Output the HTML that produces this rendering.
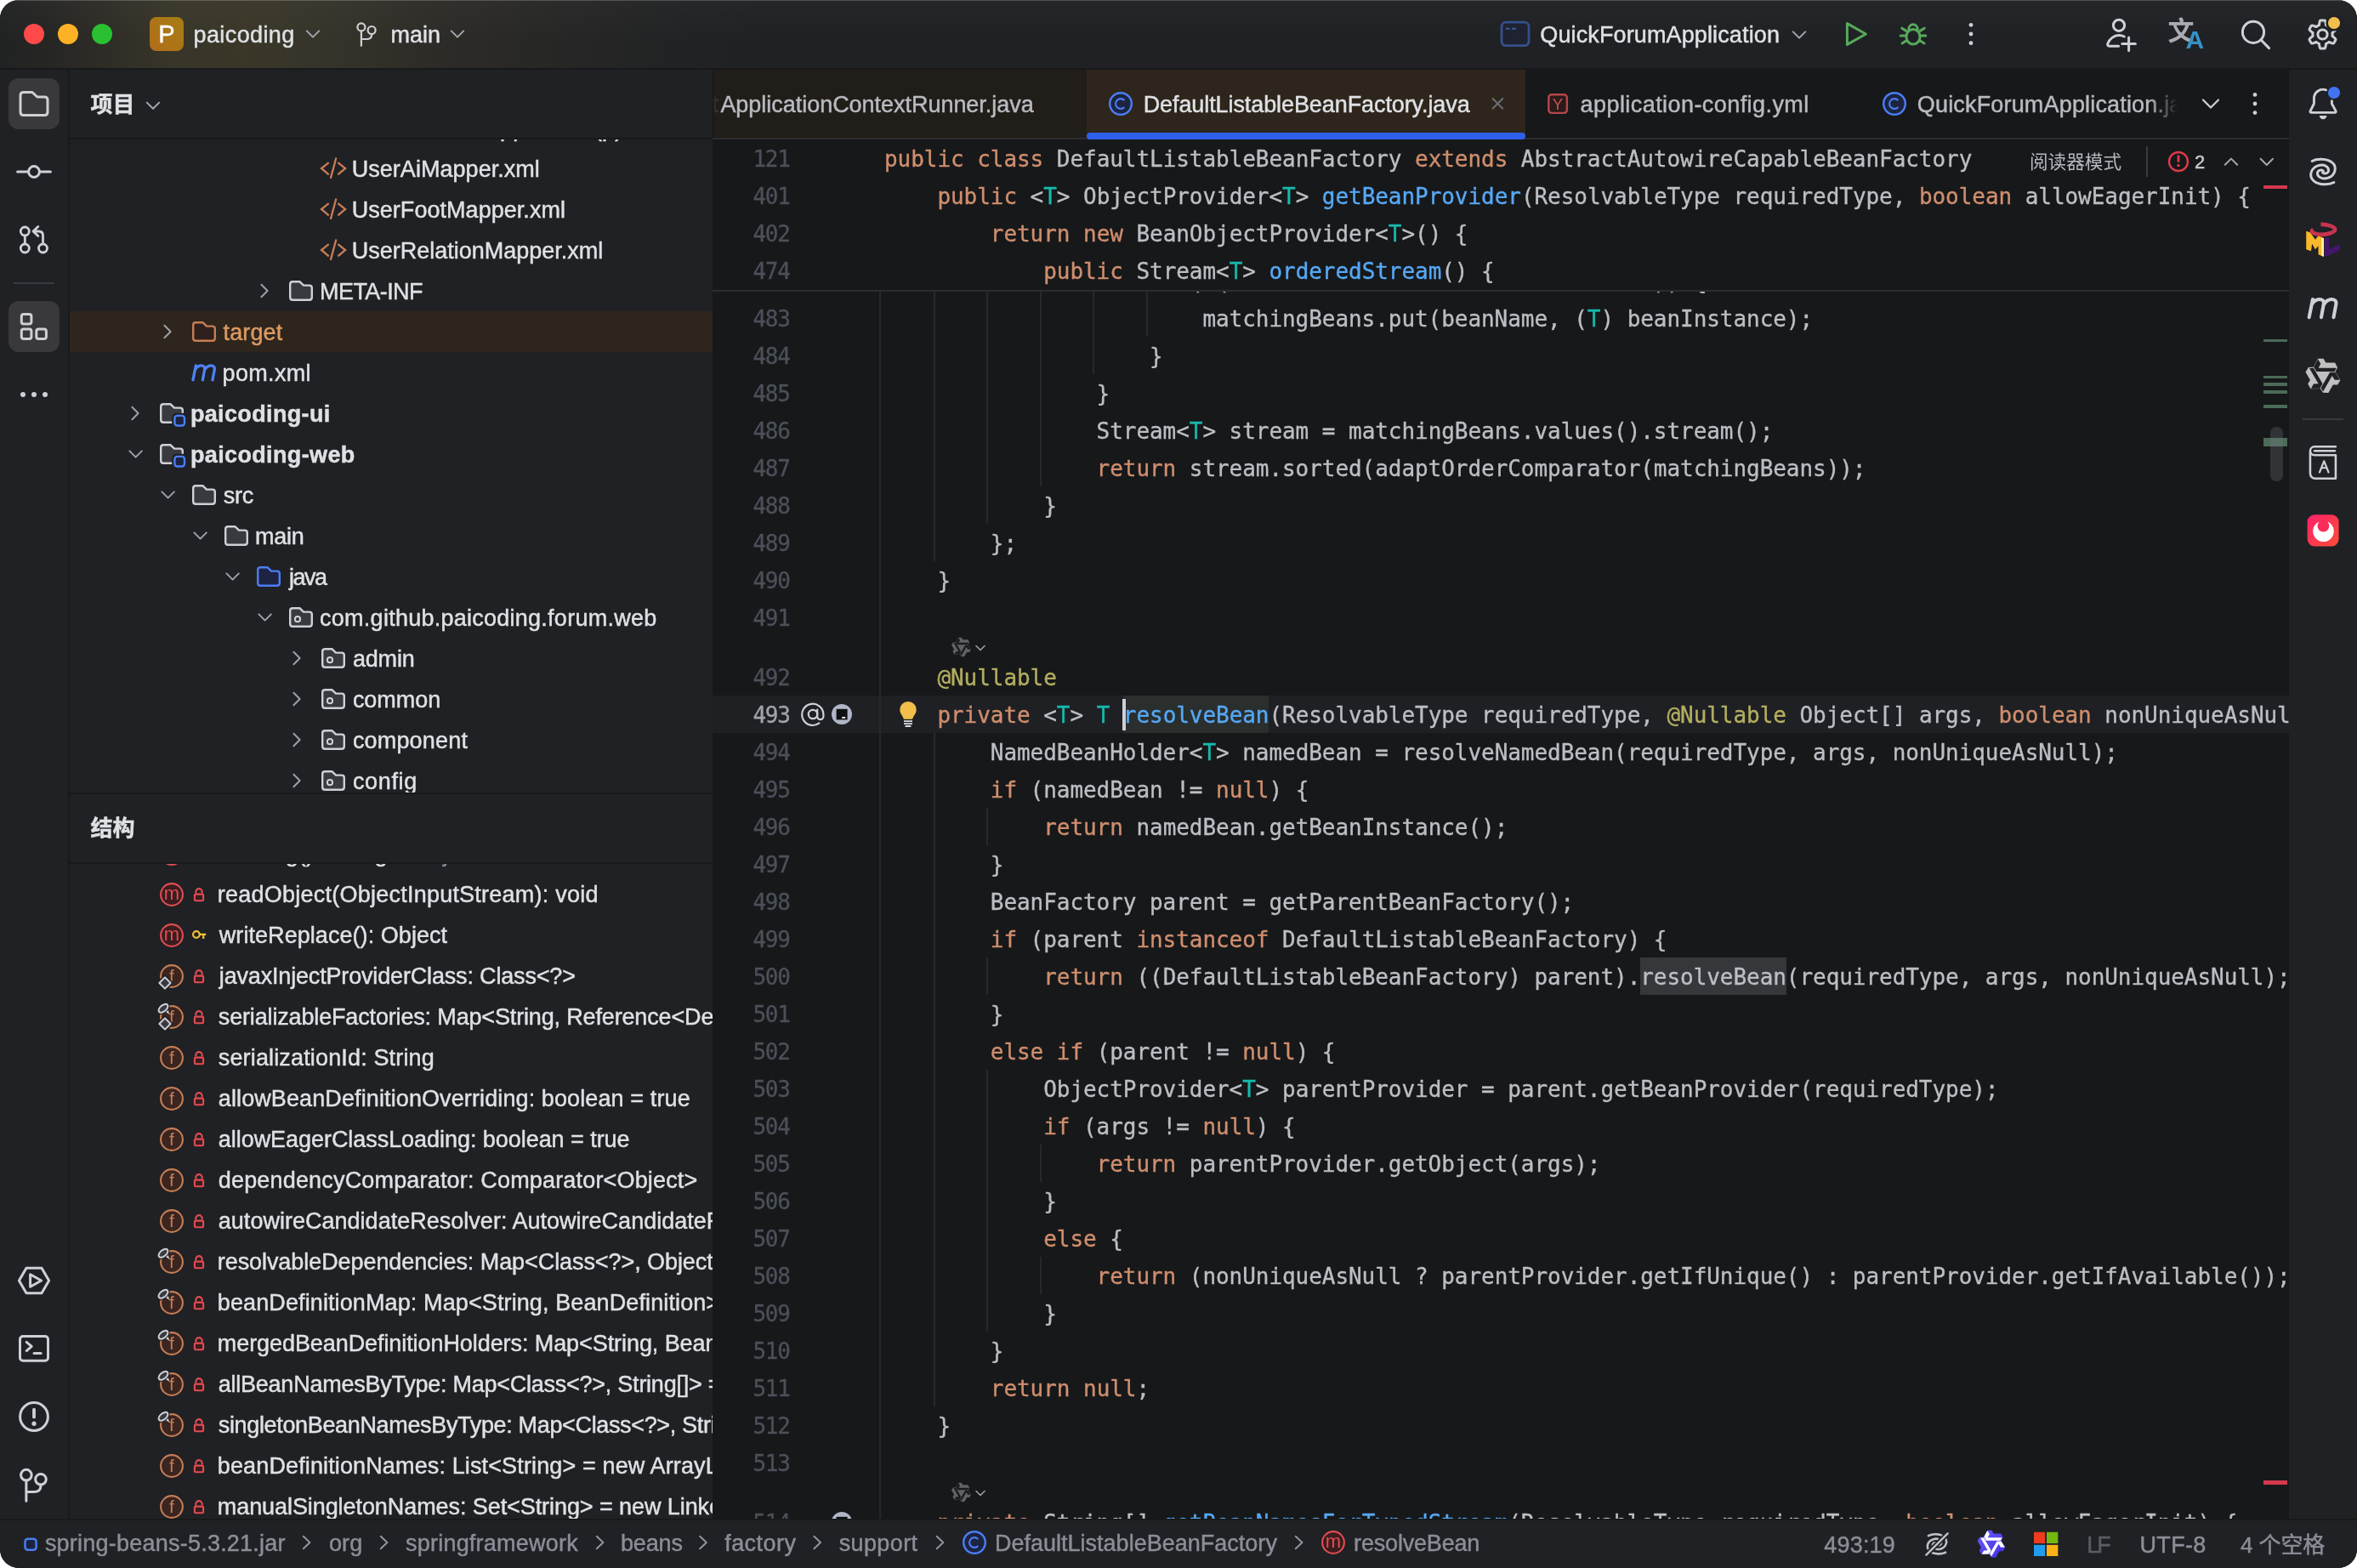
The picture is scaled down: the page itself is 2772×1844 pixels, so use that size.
<!DOCTYPE html>
<html lang="zh"><head><meta charset="utf-8"><title>paicoding – DefaultListableBeanFactory.java</title>
<style>
html,body{margin:0;padding:0;background:#fff;width:2772px;height:1844px;overflow:hidden;}
#win{will-change:transform;position:relative;width:2772px;height:1844px;border-radius:22px;overflow:hidden;background:#202124;
 font-family:"Liberation Sans","Noto Sans CJK SC",sans-serif;font-size:27px;color:#dfe1e5;letter-spacing:.25px;}
#win *{box-sizing:border-box;}
.a{position:absolute;}
.t{position:absolute;white-space:pre;line-height:48px;height:48px;-webkit-text-stroke:.45px currentColor;}
svg{position:absolute;overflow:visible;}
/* title bar */
#title{left:0;top:0;width:2772px;height:80px;background:
 linear-gradient(180deg,rgba(255,255,255,.025),rgba(255,255,255,0) 60%),
 linear-gradient(90deg,#212223 0,#262624 60px,#2e2c26 120px,#383529 200px,#3a3729 290px,#35322a 400px,#2d2b27 520px,#272726 640px,#222324 780px,#202124 900px);}
#title:before{content:"";position:absolute;left:0;top:0;right:0;height:1px;background:rgba(255,255,255,.2);}
#tline{left:0;top:80px;width:2772px;height:2px;background:#18191b;}
.tl{position:absolute;top:28px;width:24px;height:24px;border-radius:50%;}
#pico{left:176px;top:20px;width:40px;height:40px;border-radius:8px;background:linear-gradient(45deg,#b46c1a,#a47e14);
 color:#fff;font-size:29px;line-height:41px;-webkit-text-stroke:.4px #fff;text-align:center;letter-spacing:0;}
/* strips */
#lstrip{left:0;top:82px;width:80px;height:1704px;background:#202124;}
#lsdiv{left:80px;top:82px;width:2px;height:1704px;background:#18191b;}
#rstrip{left:2692px;top:82px;width:80px;height:1704px;background:#202124;}
.sbtn{position:absolute;left:10px;width:60px;height:60px;border-radius:12px;background:#39393b;}
/* left panel */
#lpanel{left:82px;top:82px;width:756px;height:1704px;background:#202124;overflow:hidden;}
.hline{position:absolute;left:0;width:756px;height:2px;background:#18191b;}
.row{position:absolute;left:0;width:756px;height:48px;}
.row.sel{background:#2e251d;}
.b{font-weight:bold;}
/* editor */
#editor{left:838px;top:82px;width:1854px;height:1704px;background:#17181a;overflow:hidden;}
.code,.ln{font-family:"DejaVu Sans Mono","Liberation Mono",monospace;font-size:26px;letter-spacing:-.053px;}
.cl{position:absolute;left:202px;height:44px;line-height:44px;white-space:pre;color:#bcbec4;-webkit-text-stroke:.35px currentColor;}
.ln{position:absolute;left:0;width:90.5px;text-align:right;letter-spacing:-1.3px;-webkit-text-stroke:.3px currentColor;height:44px;line-height:44px;color:#4b5059;}
.k{color:#cf8e6d;}.f{color:#56a8f5;}.tp{color:#16baac;}.an{color:#b3ae60;}
.g{position:absolute;width:2px;background:#27282c;}
/* status */
#status{left:0;top:1786px;width:2772px;height:58px;background:#202124;border-top:2px solid #18191b;color:#8b8e98;}
#status .t{line-height:56px;height:56px;top:0;}

</style></head>
<body>
<div id="win">
<div class="a" id="title">
<div class="tl" style="left:28px;background:#fe4a49"></div><div class="tl" style="left:68px;background:#fdb226"></div><div class="tl" style="left:108px;background:#29c131"></div>
<div class="a" id="pico">P</div>
<div id="k_t_paicoding" class="t" style="left:227.50px;top:17.0px;letter-spacing:0.4px;">paicoding</div>
<div id="k_t_main" class="t" style="left:459.60px;top:17.0px;letter-spacing:-0.067px;">main</div>
<div id="k_t_qfa" class="t" style="left:1811.30px;top:17.0px;letter-spacing:0.125px;">QuickForumApplication</div>
<div class="a" style="left:2549.6px;top:17px;font:700 31px/34px 'Noto Sans CJK SC',sans-serif;color:#a9acb1;letter-spacing:0">文</div>
<div class="a" style="left:2570.4px;top:32px;font:700 30px/30px 'Liberation Sans',sans-serif;color:#3592c4;letter-spacing:0">A</div>
</div><div class="a" id="tline"></div>
<div class="a" id="lstrip"><div class="sbtn" style="top:10px"></div><div class="sbtn" style="top:272px"></div><div class="a" style="left:16px;top:250px;width:48px;height:2px;background:#3a3b3f"></div></div><div class="a" id="lsdiv"></div>
<div class="a" id="rstrip"><div class="a" style="left:16px;top:410px;width:48px;height:2px;background:#3a3b3f"></div></div>
<div class="a" id="status">
<div id="k_s_jar" class="t" style="left:52.90px;top:-1.2px;letter-spacing:0.227px;">spring-beans-5.3.21.jar</div>
<div id="k_s_org" class="t" style="left:386.90px;top:-1.2px;letter-spacing:0.2px;">org</div>
<div id="k_s_sf" class="t" style="left:477.00px;top:-1.2px;letter-spacing:0.221px;">springframework</div>
<div id="k_s_beans" class="t" style="left:730.00px;top:-1.2px;letter-spacing:-0.15px;">beans</div>
<div id="k_s_factory" class="t" style="left:852.20px;top:-1.2px;letter-spacing:0.45px;">factory</div>
<div id="k_s_support" class="t" style="left:986.70px;top:-1.2px;letter-spacing:0.383px;">support</div>
<div id="k_s_dlbf" class="t" style="left:1169.90px;top:-1.2px;letter-spacing:0.012px;">DefaultListableBeanFactory</div>
<div id="k_s_rb" class="t" style="left:1592.10px;top:-1.2px;letter-spacing:-0.18px;">resolveBean</div>
<div id="k_s_pos" class="t" style="left:2145.20px;top:1.0px;letter-spacing:0.22px;">493:19</div>
<div id="k_s_lf" class="t" style="left:2454.20px;top:1.0px;letter-spacing:-3.0px;color:#5a5d63;">LF</div>
<div id="k_s_utf" class="t" style="left:2516.50px;top:1.0px;letter-spacing:0.325px;">UTF-8</div>
<div id="k_s_sp" class="t" style="left:2634.90px;top:0.6px;font:26px 'Liberation Sans','Noto Sans CJK SC',sans-serif;line-height:56px;letter-spacing:-0.05px;">4 个空格</div>
</div>
<svg class="a" style="left:0;top:0;pointer-events:none" width="2772" height="1844" viewBox="0 0 2772 1844">
<defs><linearGradient id="tyg" x1="0" y1="0" x2="1" y2="1"><stop offset="0" stop-color="#6a5cff"/><stop offset="1" stop-color="#3f2ee0"/></linearGradient><linearGradient id="redg" x1="0" y1="0" x2="1" y2="1"><stop offset="0" stop-color="#fd2168"/><stop offset="1" stop-color="#fc4c38"/></linearGradient><filter id="bl"><feGaussianBlur stdDeviation="0.7"/></filter></defs>
<path d="M360.8,36.4 L368,43.6 L375.2,36.4" fill="none" stroke="#a4a7b0" stroke-width="2.0" stroke-linecap="round" stroke-linejoin="round"/>
<circle cx="424.9" cy="31.9" r="4.5" fill="none" stroke="#ced0d6" stroke-width="2.2"/><circle cx="437.1" cy="35.5" r="4.5" fill="none" stroke="#ced0d6" stroke-width="2.2"/><path d="M424.9,36.4 V53.8 M437.1,40.0 V41.0 Q437.1,46.0 431.1,46.0 H424.9" fill="none" stroke="#ced0d6" stroke-width="2.2" stroke-linecap="round"/>
<path d="M530.8,36.4 L538,43.6 L545.2,36.4" fill="none" stroke="#a4a7b0" stroke-width="2.0" stroke-linecap="round" stroke-linejoin="round"/>
<rect x="1766" y="26.2" width="32" height="27.4" rx="5" fill="#1f2230" stroke="#35508c" stroke-width="2.8"/><path d="M1770.8,33.8 h4.8 M1778,33.8 h5" stroke="#35508c" stroke-width="2.6"/>
<path d="M2108.8,37.4 L2116,44.6 L2123.2,37.4" fill="none" stroke="#a4a7b0" stroke-width="2.0" stroke-linecap="round" stroke-linejoin="round"/>
<path d="M2172.4,27.6 L2194.4,40 L2172.4,52.4 Z" fill="none" stroke="#57aa5a" stroke-width="3" stroke-linejoin="round"/>
<g fill="none" stroke="#57aa5a" stroke-width="3" stroke-linecap="round"><rect x="2242" y="34.6" width="16" height="17.4" rx="8"/><path d="M2244.8,34.4 a5.2,5.6 0 0 1 10.4,0"/><path d="M2236.8,33.2 L2242,36.4 M2235.2,42 H2242 M2237,51 L2242,47.8 M2263.2,33.2 L2258,36.4 M2264.8,42 H2258 M2263,51 L2258,47.8"/></g>
<circle cx="2318" cy="29.3" r="2.4" fill="#ced0d6"/>
<circle cx="2318" cy="40" r="2.4" fill="#ced0d6"/>
<circle cx="2318" cy="50.7" r="2.4" fill="#ced0d6"/>
<g fill="none" stroke="#ced0d6" stroke-width="3" stroke-linecap="round"><circle cx="2492" cy="29.8" r="6.6"/><path d="M2491.6,54.2 H2480.6 a2,2 0 0 1 -1.9,-2.6 C2480.6,45.6 2486.4,41.6 2492,41.6 C2494.4,41.6 2496.4,42.1 2498.2,43"/><path d="M2503.6,44 V59.4 M2495.8,51.6 H2511.4"/></g>
<g fill="none" stroke="#ced0d6" stroke-width="3" stroke-linecap="round"><circle cx="2650" cy="37.8" r="12.6"/><path d="M2659.2,47 L2668.6,56.6"/></g>
<path d="M2743.10,40.50 L2743.09,41.01 L2743.06,41.51 L2743.00,42.01 L2743.05,42.54 L2744.07,43.29 L2745.12,44.15 L2746.12,45.11 L2746.98,46.13 L2746.84,46.85 L2746.54,47.52 L2746.22,48.17 L2745.88,48.80 L2745.50,49.42 L2745.10,50.02 L2744.67,50.61 L2744.12,51.09 L2742.80,50.86 L2741.47,50.47 L2740.20,49.99 L2739.04,49.48 L2738.56,49.70 L2738.15,50.00 L2737.73,50.28 L2737.30,50.55 L2736.86,50.79 L2736.40,51.01 L2735.94,51.22 L2735.51,51.52 L2735.37,52.77 L2735.15,54.12 L2734.82,55.47 L2734.36,56.72 L2733.67,56.96 L2732.95,57.04 L2732.22,57.08 L2731.50,57.10 L2730.78,57.08 L2730.05,57.04 L2729.33,56.96 L2728.64,56.72 L2728.18,55.47 L2727.85,54.12 L2727.63,52.77 L2727.49,51.52 L2727.06,51.22 L2726.60,51.01 L2726.14,50.79 L2725.70,50.55 L2725.27,50.28 L2724.85,50.00 L2724.44,49.70 L2723.96,49.48 L2722.80,49.99 L2721.53,50.47 L2720.20,50.86 L2718.88,51.09 L2718.33,50.61 L2717.90,50.02 L2717.50,49.42 L2717.12,48.80 L2716.78,48.17 L2716.46,47.52 L2716.16,46.85 L2716.02,46.13 L2716.88,45.11 L2717.88,44.15 L2718.93,43.29 L2719.95,42.54 L2720.00,42.01 L2719.94,41.51 L2719.91,41.01 L2719.90,40.50 L2719.91,39.99 L2719.94,39.49 L2720.00,38.99 L2719.95,38.46 L2718.93,37.71 L2717.88,36.85 L2716.88,35.89 L2716.02,34.87 L2716.16,34.15 L2716.46,33.48 L2716.78,32.83 L2717.12,32.20 L2717.50,31.58 L2717.90,30.98 L2718.33,30.39 L2718.88,29.91 L2720.20,30.14 L2721.53,30.53 L2722.80,31.01 L2723.96,31.52 L2724.44,31.30 L2724.85,31.00 L2725.27,30.72 L2725.70,30.45 L2726.14,30.21 L2726.60,29.99 L2727.06,29.78 L2727.49,29.48 L2727.63,28.23 L2727.85,26.88 L2728.18,25.53 L2728.64,24.28 L2729.33,24.04 L2730.05,23.96 L2730.78,23.92 L2731.50,23.90 L2732.22,23.92 L2732.95,23.96 L2733.67,24.04 L2734.36,24.28 L2734.82,25.53 L2735.15,26.88 L2735.37,28.23 L2735.51,29.48 L2735.94,29.78 L2736.40,29.99 L2736.86,30.21 L2737.30,30.45 L2737.73,30.72 L2738.15,31.00 L2738.56,31.30 L2739.04,31.52 L2740.20,31.01 L2741.47,30.53 L2742.80,30.14 L2744.12,29.91 L2744.67,30.39 L2745.10,30.98 L2745.50,31.58 L2745.88,32.20 L2746.22,32.83 L2746.54,33.48 L2746.84,34.15 L2746.98,34.87 L2746.12,35.89 L2745.12,36.85 L2744.07,37.71 L2743.05,38.46 L2743.00,38.99 L2743.06,39.49 L2743.09,39.99 Z" fill="none" stroke="#ced0d6" stroke-width="3" stroke-linejoin="round"/><circle cx="2731.5" cy="40.5" r="5.6" fill="none" stroke="#ced0d6" stroke-width="3"/>
<circle cx="2745" cy="27" r="9.6" fill="#202124"/><circle cx="2745" cy="27" r="7.1" fill="#f2bf4d"/>
<path d="M24.0,112.25 Q24.0,108.5 27.75,108.5 L38.0,108.5 L43.75,114.0 L52.25,114.0 Q56.0,114.0 56.0,117.75 L56.0,131.75 Q56.0,135.5 52.25,135.5 L27.75,135.5 Q24.0,135.5 24.0,131.75 Z" fill="none" stroke="#ced0d6" stroke-width="3.0" stroke-linejoin="round"/>
<g fill="none" stroke="#ced0d6" stroke-width="3" stroke-linecap="round"><circle cx="40" cy="202" r="6.4"/><path d="M20.6,202 H32.4 M47.6,202 H59.4"/></g>
<g fill="none" stroke="#ced0d6" stroke-width="2.8" stroke-linecap="round" stroke-linejoin="round"><circle cx="29.3" cy="272" r="5"/><circle cx="29.3" cy="292" r="5"/><circle cx="50.5" cy="292" r="5"/><path d="M29.3,277.4 V286.6 M50.5,286.6 V277 Q50.5,272 45.5,272 H39.6 M44.8,266.4 L39,272 L44.8,277.6"/></g>
<g fill="none" stroke="#ced0d6" stroke-width="3"><rect x="25.3" y="369.5" width="11.6" height="11.6" rx="2.6"/><rect x="25.3" y="387" width="11.6" height="11.6" rx="2.6"/><rect x="42.8" y="387" width="11.6" height="11.6" rx="2.6"/></g>
<circle cx="27" cy="464" r="3" fill="#ced0d6"/>
<circle cx="40" cy="464" r="3" fill="#ced0d6"/>
<circle cx="53" cy="464" r="3" fill="#ced0d6"/>
<g fill="none" stroke="#ced0d6" stroke-width="3" stroke-linejoin="round"><path d="M22.4,1506 L31,1491.2 H49 L57.6,1506 L49,1520.8 H31 Z"/><path d="M35.6,1498.8 V1513.2 L48.6,1506 Z"/></g>
<g fill="none" stroke="#ced0d6" stroke-width="3" stroke-linecap="round" stroke-linejoin="round"><rect x="23.5" y="1571.5" width="33" height="28.8" rx="3.5"/><path d="M31.2,1578.4 L37.2,1583.4 L31.2,1588.6 M40,1591.4 H48.2"/></g>
<g fill="none" stroke="#ced0d6" stroke-width="3" stroke-linecap="round"><circle cx="40" cy="1666" r="16.4"/><path d="M40,1657.6 V1666.4" stroke-width="3.8"/></g><circle cx="40" cy="1674.2" r="2.6" fill="#ced0d6"/>
<circle cx="30.86" cy="1734.66" r="6.3" fill="none" stroke="#ced0d6" stroke-width="3"/><circle cx="47.94" cy="1739.7" r="6.3" fill="none" stroke="#ced0d6" stroke-width="3"/><path d="M30.86,1740.96 V1765.32 M47.94,1746.0 V1747.4 Q47.94,1754.4 39.54,1754.4 H30.86" fill="none" stroke="#ced0d6" stroke-width="3" stroke-linecap="round"/>
<g fill="none" stroke="#ced0d6" stroke-width="2.9" stroke-linecap="round" stroke-linejoin="round"><path d="M2735.6,105.8 A10.6,10.6 0 0 0 2721.4,116.2 V122 L2717.2,130.4 Q2716.4,132.4 2718.6,132.4 H2745.6 Q2747.8,132.4 2747,130.4 L2742.4,122 V118.8"/></g><path d="M2727.8,136 h8.6 a4.3,4.3 0 0 1 -8.6,0 z" fill="#ced0d6"/><circle cx="2745" cy="109" r="7.1" fill="#4273f3"/>
<g transform="translate(2732,202) scale(0.04081632653061224) translate(-785,-785)" fill="none" stroke="#ced0d6" stroke-width="72" stroke-linecap="round"><path d="M470,478 C600,400 900,395 1050,520 C1200,650 1150,900 900,970 C750,1005 620,930 625,822 C630,742 720,715 795,762"/><path d="M1100,1092 C970,1170 670,1175 520,1050 C370,920 420,670 670,600 C820,565 950,640 945,748 C940,828 850,855 775,808"/></g>
<g transform="translate(2700,250) scale(0.04081632653061224)" filter="url(#bl)"><path d="M300,530 L420,575 L560,780 L650,670 L800,730 L800,1265 L650,1205 L650,960 L560,1060 L470,900 L440,1110 L300,1060 Z" fill="#f9b92b"/><path d="M740,720 L810,740 L810,1265 L740,1250 Z" fill="#fff3a0"/><path d="M820,745 L960,700 L960,1060 L1270,900 L1270,1085 L960,1235 L820,1265 Z" fill="#43166b"/><path d="M720,340 C900,330 1150,410 1130,500 C1100,600 800,650 640,625 C480,600 420,540 500,490" fill="none" stroke="#c8344f" stroke-width="115"/></g>
<g transform="translate(2732,362.6) scale(0.04081632653061224) translate(-785,-800)"><path d="M490,540 L385,1060 M462,690 C520,560 660,525 740,550 C825,578 812,660 800,705 L735,1060 M812,690 C870,560 1010,525 1090,550 C1180,578 1168,660 1158,705 L1090,1060" fill="none" stroke="#ced0d6" stroke-width="100" stroke-linecap="round" stroke-linejoin="round"/></g>
<g transform="translate(2732,442) scale(1.0)"><polygon points="-5.90,-20.20 0.60,-20.20 3.30,-15.50 14.10,-15.50 17.10,-9.80 14.50,-4.70 20.44,4.99 17.19,10.62 11.77,10.61 6.37,19.96 -0.06,19.71 -3.18,14.91 -14.54,15.21 -17.79,9.58 -15.07,4.89 -20.47,-4.46 -17.04,-9.91 -11.32,-10.21" fill="#c0c0c0"/><polygon points="-5.90,-19.60 -2.70,-14.30 -5.30,-9.30 15.90,-9.30 13.60,-5.00 -7.70,-5.00 -10.90,-10.40" fill="#202124" transform="rotate(0)"/><polygon points="-5.90,-19.60 -2.70,-14.30 -5.30,-9.30 15.90,-9.30 13.60,-5.00 -7.70,-5.00 -10.90,-10.40" fill="#202124" transform="rotate(120)"/><polygon points="-5.90,-19.60 -2.70,-14.30 -5.30,-9.30 15.90,-9.30 13.60,-5.00 -7.70,-5.00 -10.90,-10.40" fill="#202124" transform="rotate(240)"/></g>
<g transform="translate(2700,520) scale(0.04081632653061224)" fill="none" stroke="#ced0d6" stroke-width="62" stroke-linecap="round" stroke-linejoin="round"><path d="M1150,130 L540,130 A125,125 0 0 0 415,255 L415,900 A150,150 0 0 0 565,1050 L1150,1050 L1150,375 L540,375 A125,125 0 0 1 415,255"/><path d="M540,250 H1125"/><path d="M685,870 L815,545 L945,870 M742,742 H888" stroke-width="52"/></g>
<rect x="2713.6" y="605.2" width="37" height="37.4" rx="8.6" fill="url(#redg)"/><clipPath id="cpw"><rect x="2713" y="614" width="40" height="30"/></clipPath><circle cx="2732.5" cy="624.8" r="12.3" fill="#fff" clip-path="url(#cpw)"/><circle cx="2732.4" cy="618.6" r="6.9" fill="#fb2c5a"/>
<rect x="29.5" y="1809.7" width="13.1" height="13.1" rx="3.2" fill="#1c2340" stroke="#4b7ef5" stroke-width="2.4"/>
<path d="M356.8,1806.8 L364.40000000000003,1814 L356.8,1821.2" fill="none" stroke="#9194a0" stroke-width="2" stroke-linecap="round" stroke-linejoin="round"/>
<path d="M447.8,1806.8 L455.40000000000003,1814 L447.8,1821.2" fill="none" stroke="#9194a0" stroke-width="2" stroke-linecap="round" stroke-linejoin="round"/>
<path d="M701.8000000000001,1806.8 L709.4,1814 L701.8000000000001,1821.2" fill="none" stroke="#9194a0" stroke-width="2" stroke-linecap="round" stroke-linejoin="round"/>
<path d="M823.2,1806.8 L830.8,1814 L823.2,1821.2" fill="none" stroke="#9194a0" stroke-width="2" stroke-linecap="round" stroke-linejoin="round"/>
<path d="M957.4000000000001,1806.8 L965.0,1814 L957.4000000000001,1821.2" fill="none" stroke="#9194a0" stroke-width="2" stroke-linecap="round" stroke-linejoin="round"/>
<path d="M1101.7,1806.8 L1109.3,1814 L1101.7,1821.2" fill="none" stroke="#9194a0" stroke-width="2" stroke-linecap="round" stroke-linejoin="round"/>
<path d="M1523.8,1806.8 L1531.3999999999999,1814 L1523.8,1821.2" fill="none" stroke="#9194a0" stroke-width="2" stroke-linecap="round" stroke-linejoin="round"/>
<circle cx="1146" cy="1814" r="12.8" fill="#1d2440" stroke="#4b7ef5" stroke-width="2.4"/><path d="M1150.38,1810.05 A5.9,5.9 0 1 0 1150.38,1817.95" fill="none" stroke="#4b7ef5" stroke-width="2.1"/>
<circle cx="1568" cy="1814" r="12.9" fill="#3a1d1f" stroke="#e24c53" stroke-width="2.1"/><text x="1568" y="1819.6" font-family="Liberation Sans, sans-serif" font-size="22" fill="#e24c53" text-anchor="middle" letter-spacing="0">m</text>
<g transform="translate(2278,1815.8) scale(0.03183673469387755) translate(-785,-785)" fill="none" stroke="#bfc1c7" stroke-width="82" stroke-linecap="round"><path d="M470,478 C600,400 900,395 1050,520 C1200,650 1150,900 900,970 C750,1005 620,930 625,822 C630,742 720,715 795,762"/><path d="M1100,1092 C970,1170 670,1175 520,1050 C370,920 420,670 670,600 C820,565 950,640 945,748 C940,828 850,855 775,808"/></g>
<path d="M2290.6,1803.4 L2265.4,1828.6" stroke="#202124" stroke-width="6"/><path d="M2290.6,1803.4 L2265.4,1828.6" stroke="#bfc1c7" stroke-width="2.4" stroke-linecap="round"/>
<g transform="translate(2342,1815.8) scale(0.8)"><polygon points="-5.90,-20.20 0.60,-20.20 3.30,-15.50 14.10,-15.50 17.10,-9.80 14.50,-4.70 20.44,4.99 17.19,10.62 11.77,10.61 6.37,19.96 -0.06,19.71 -3.18,14.91 -14.54,15.21 -17.79,9.58 -15.07,4.89 -20.47,-4.46 -17.04,-9.91 -11.32,-10.21" fill="url(#tyg)"/><polygon points="-5.90,-19.60 -2.70,-14.30 -5.30,-9.30 15.90,-9.30 13.60,-5.00 -7.70,-5.00 -10.90,-10.40" fill="#ffffff" transform="rotate(0)"/><polygon points="-5.90,-19.60 -2.70,-14.30 -5.30,-9.30 15.90,-9.30 13.60,-5.00 -7.70,-5.00 -10.90,-10.40" fill="#ffffff" transform="rotate(120)"/><polygon points="-5.90,-19.60 -2.70,-14.30 -5.30,-9.30 15.90,-9.30 13.60,-5.00 -7.70,-5.00 -10.90,-10.40" fill="#ffffff" transform="rotate(240)"/></g>
<rect x="2392" y="1801.8" width="13.2" height="13.2" fill="#ee3c1e"/><rect x="2407" y="1801.8" width="13.3" height="13.2" fill="#74b70f"/><rect x="2392" y="1816.8" width="13.2" height="13.2" fill="#1f9cee"/><rect x="2407" y="1816.8" width="13.3" height="13.2" fill="#fdb013"/>
</svg>
<div class="a" id="lpanel">
<div class="t b" style="left:24.6px;top:1.4px;height:80px;line-height:80px;font-size:26px;letter-spacing:0;font-weight:700">项目</div>
<div class="hline" style="top:80px"></div>
<div class="a" style="left:0;top:82px;width:756px;height:768px;overflow:hidden">
<div id="k_tr_prev" class="t" style="left:331.70px;top:-37.0px;letter-spacing:0.15px;">UserFollowMapper.xml (p)</div>
<div id="k_tr_UserAiMapper_xml" class="t" style="left:331.70px;top:11.0px;letter-spacing:0.04px;">UserAiMapper.xml</div>
<div id="k_tr_UserFootMapper_xml" class="t" style="left:331.70px;top:59.0px;letter-spacing:0.041px;">UserFootMapper.xml</div>
<div id="k_tr_UserRelationMapper_xml" class="t" style="left:331.70px;top:107.0px;letter-spacing:0.0px;">UserRelationMapper.xml</div>
<div id="k_tr_META_INF" class="t" style="left:294.10px;top:155.0px;letter-spacing:-0.586px;">META-INF</div>
<div class="row sel" style="top:202px"></div>
<div id="k_tr_target" class="t" style="left:180.60px;top:203.0px;letter-spacing:0.12px;color:#dd9a62;">target</div>
<div id="k_tr_pom_xml" class="t" style="left:179.60px;top:251.0px;letter-spacing:0.333px;">pom.xml</div>
<div id="k_tr_paicoding_ui" class="t" style="left:141.90px;top:299.0px;font:bold 27px 'Liberation Sans','Noto Sans CJK SC',sans-serif;line-height:48px;letter-spacing:0.355px;">paicoding-ui</div>
<div id="k_tr_paicoding_web" class="t" style="left:141.90px;top:347.0px;font:bold 27px 'Liberation Sans','Noto Sans CJK SC',sans-serif;line-height:48px;letter-spacing:0.367px;">paicoding-web</div>
<div id="k_tr_src" class="t" style="left:180.70px;top:395.0px;letter-spacing:-0.25px;">src</div>
<div id="k_tr_main" class="t" style="left:217.90px;top:443.0px;letter-spacing:-0.233px;">main</div>
<div id="k_tr_java" class="t" style="left:258.00px;top:491.0px;letter-spacing:-1.533px;">java</div>
<div id="k_tr_com_github_paicoding_forum_web" class="t" style="left:294.10px;top:539.0px;letter-spacing:0.255px;">com.github.paicoding.forum.web</div>
<div id="k_tr_admin" class="t" style="left:332.90px;top:587.0px;letter-spacing:-0.175px;">admin</div>
<div id="k_tr_common" class="t" style="left:332.90px;top:635.0px;letter-spacing:-0.02px;">common</div>
<div id="k_tr_component" class="t" style="left:332.90px;top:683.0px;letter-spacing:0.175px;">component</div>
<div id="k_tr_config" class="t" style="left:332.90px;top:731.0px;letter-spacing:0.66px;">config</div>
<svg class="a" style="left:0;top:0" width="756" height="768" viewBox="82 164 756 768">
<path d="M386.7,191.1 L378,198 L386.7,205.3 M395.4,185.5 L388.8,209.9 M397.4,191.1 L406.1,198 L397.4,205.3" fill="none" stroke="#c77d55" stroke-width="2.3" stroke-linecap="butt" stroke-linejoin="miter"/>
<path d="M386.7,239.1 L378,246 L386.7,253.3 M395.4,233.5 L388.8,257.9 M397.4,239.1 L406.1,246 L397.4,253.3" fill="none" stroke="#c77d55" stroke-width="2.3" stroke-linecap="butt" stroke-linejoin="miter"/>
<path d="M386.7,287.1 L378,294 L386.7,301.3 M395.4,281.5 L388.8,305.9 M397.4,287.1 L406.1,294 L397.4,301.3" fill="none" stroke="#c77d55" stroke-width="2.3" stroke-linecap="butt" stroke-linejoin="miter"/>
<path d="M307.4,334.8 L314.6,342 L307.4,349.2" fill="none" stroke="#9da0a8" stroke-width="2.0" stroke-linecap="round" stroke-linejoin="round"/>
<path d="M341.2,334.2 Q341.2,331.2 344.2,331.2 L352.4,331.2 L357.0,335.59999999999997 L363.8,335.59999999999997 Q366.8,335.59999999999997 366.8,338.59999999999997 L366.8,349.8 Q366.8,352.8 363.8,352.8 L344.2,352.8 Q341.2,352.8 341.2,349.8 Z" fill="#393a3f" stroke="#ced0d6" stroke-width="2.4" stroke-linejoin="round"/>
<path d="M193.4,382.8 L200.6,390 L193.4,397.2" fill="none" stroke="#9da0a8" stroke-width="2.0" stroke-linecap="round" stroke-linejoin="round"/>
<path d="M227.2,382.2 Q227.2,379.2 230.2,379.2 L238.39999999999998,379.2 L242.99999999999997,383.59999999999997 L249.8,383.59999999999997 Q252.8,383.59999999999997 252.8,386.59999999999997 L252.8,397.8 Q252.8,400.8 249.8,400.8 L230.2,400.8 Q227.2,400.8 227.2,397.8 Z" fill="#30201d" stroke="#c77d55" stroke-width="2.4" stroke-linejoin="round"/>
<g transform="translate(240,438.4) scale(0.0326530612244898) translate(-785,-800)"><path d="M490,540 L385,1060 M462,690 C520,560 660,525 740,550 C825,578 812,660 800,705 L735,1060 M812,690 C870,560 1010,525 1090,550 C1180,578 1168,660 1158,705 L1090,1060" fill="none" stroke="#4d82f7" stroke-width="100" stroke-linecap="round" stroke-linejoin="round"/></g>
<path d="M155.4,478.8 L162.6,486 L155.4,493.2" fill="none" stroke="#9da0a8" stroke-width="2.0" stroke-linecap="round" stroke-linejoin="round"/>
<path d="M189.2,478.2 Q189.2,475.2 192.2,475.2 L200.39999999999998,475.2 L204.99999999999997,479.59999999999997 L211.8,479.59999999999997 Q214.8,479.59999999999997 214.8,482.59999999999997 L214.8,493.8 Q214.8,496.8 211.8,496.8 L192.2,496.8 Q189.2,496.8 189.2,493.8 Z" fill="#393a3f" stroke="#ced0d6" stroke-width="2.4" stroke-linejoin="round"/><rect x="202.2" y="485.7" width="18" height="18" rx="5" fill="#202124"/><rect x="205.39999999999998" y="488.9" width="11.6" height="11.6" rx="3" fill="#1c2340" stroke="#4b7ef5" stroke-width="2.4"/>
<path d="M152.4,530.4 L159.6,537.6 L166.79999999999998,530.4" fill="none" stroke="#9da0a8" stroke-width="2.0" stroke-linecap="round" stroke-linejoin="round"/>
<path d="M189.2,526.2 Q189.2,523.2 192.2,523.2 L200.39999999999998,523.2 L204.99999999999997,527.6 L211.8,527.6 Q214.8,527.6 214.8,530.6 L214.8,541.8 Q214.8,544.8 211.8,544.8 L192.2,544.8 Q189.2,544.8 189.2,541.8 Z" fill="#393a3f" stroke="#ced0d6" stroke-width="2.4" stroke-linejoin="round"/><rect x="202.2" y="533.7" width="18" height="18" rx="5" fill="#202124"/><rect x="205.39999999999998" y="536.9000000000001" width="11.6" height="11.6" rx="3" fill="#1c2340" stroke="#4b7ef5" stroke-width="2.4"/>
<path d="M190.4,578.4 L197.6,585.6 L204.79999999999998,578.4" fill="none" stroke="#9da0a8" stroke-width="2.0" stroke-linecap="round" stroke-linejoin="round"/>
<path d="M227.2,574.2 Q227.2,571.2 230.2,571.2 L238.39999999999998,571.2 L242.99999999999997,575.6 L249.8,575.6 Q252.8,575.6 252.8,578.6 L252.8,589.8 Q252.8,592.8 249.8,592.8 L230.2,592.8 Q227.2,592.8 227.2,589.8 Z" fill="#393a3f" stroke="#ced0d6" stroke-width="2.4" stroke-linejoin="round"/>
<path d="M228.4,626.4 L235.6,633.6 L242.79999999999998,626.4" fill="none" stroke="#9da0a8" stroke-width="2.0" stroke-linecap="round" stroke-linejoin="round"/>
<path d="M265.2,622.2 Q265.2,619.2 268.2,619.2 L276.4,619.2 L281.0,623.6 L287.8,623.6 Q290.8,623.6 290.8,626.6 L290.8,637.8 Q290.8,640.8 287.8,640.8 L268.2,640.8 Q265.2,640.8 265.2,637.8 Z" fill="#393a3f" stroke="#ced0d6" stroke-width="2.4" stroke-linejoin="round"/>
<path d="M266.40000000000003,674.4 L273.6,681.6 L280.8,674.4" fill="none" stroke="#9da0a8" stroke-width="2.0" stroke-linecap="round" stroke-linejoin="round"/>
<path d="M303.2,670.2 Q303.2,667.2 306.2,667.2 L314.4,667.2 L319.0,671.6 L325.8,671.6 Q328.8,671.6 328.8,674.6 L328.8,685.8 Q328.8,688.8 325.8,688.8 L306.2,688.8 Q303.2,688.8 303.2,685.8 Z" fill="#1d2340" stroke="#4b7ef5" stroke-width="2.4" stroke-linejoin="round"/>
<path d="M304.40000000000003,722.4 L311.6,729.6 L318.8,722.4" fill="none" stroke="#9da0a8" stroke-width="2.0" stroke-linecap="round" stroke-linejoin="round"/>
<path d="M341.2,718.2 Q341.2,715.2 344.2,715.2 L352.4,715.2 L357.0,719.6 L363.8,719.6 Q366.8,719.6 366.8,722.6 L366.8,733.8 Q366.8,736.8 363.8,736.8 L344.2,736.8 Q341.2,736.8 341.2,733.8 Z" fill="#393a3f" stroke="#ced0d6" stroke-width="2.4" stroke-linejoin="round"/><circle cx="350" cy="728.2" r="3.1" fill="none" stroke="#ced0d6" stroke-width="2"/>
<path d="M345.4,766.8 L352.6,774 L345.4,781.2" fill="none" stroke="#9da0a8" stroke-width="2.0" stroke-linecap="round" stroke-linejoin="round"/>
<path d="M379.2,766.2 Q379.2,763.2 382.2,763.2 L390.4,763.2 L395.0,767.6 L401.8,767.6 Q404.8,767.6 404.8,770.6 L404.8,781.8 Q404.8,784.8 401.8,784.8 L382.2,784.8 Q379.2,784.8 379.2,781.8 Z" fill="#393a3f" stroke="#ced0d6" stroke-width="2.4" stroke-linejoin="round"/><circle cx="388" cy="776.2" r="3.1" fill="none" stroke="#ced0d6" stroke-width="2"/>
<path d="M345.4,814.8 L352.6,822 L345.4,829.2" fill="none" stroke="#9da0a8" stroke-width="2.0" stroke-linecap="round" stroke-linejoin="round"/>
<path d="M379.2,814.2 Q379.2,811.2 382.2,811.2 L390.4,811.2 L395.0,815.6 L401.8,815.6 Q404.8,815.6 404.8,818.6 L404.8,829.8 Q404.8,832.8 401.8,832.8 L382.2,832.8 Q379.2,832.8 379.2,829.8 Z" fill="#393a3f" stroke="#ced0d6" stroke-width="2.4" stroke-linejoin="round"/><circle cx="388" cy="824.2" r="3.1" fill="none" stroke="#ced0d6" stroke-width="2"/>
<path d="M345.4,862.8 L352.6,870 L345.4,877.2" fill="none" stroke="#9da0a8" stroke-width="2.0" stroke-linecap="round" stroke-linejoin="round"/>
<path d="M379.2,862.2 Q379.2,859.2 382.2,859.2 L390.4,859.2 L395.0,863.6 L401.8,863.6 Q404.8,863.6 404.8,866.6 L404.8,877.8 Q404.8,880.8 401.8,880.8 L382.2,880.8 Q379.2,880.8 379.2,877.8 Z" fill="#393a3f" stroke="#ced0d6" stroke-width="2.4" stroke-linejoin="round"/><circle cx="388" cy="872.2" r="3.1" fill="none" stroke="#ced0d6" stroke-width="2"/>
<path d="M345.4,910.8 L352.6,918 L345.4,925.2" fill="none" stroke="#9da0a8" stroke-width="2.0" stroke-linecap="round" stroke-linejoin="round"/>
<path d="M379.2,910.2 Q379.2,907.2 382.2,907.2 L390.4,907.2 L395.0,911.6 L401.8,911.6 Q404.8,911.6 404.8,914.6 L404.8,925.8 Q404.8,928.8 401.8,928.8 L382.2,928.8 Q379.2,928.8 379.2,925.8 Z" fill="#393a3f" stroke="#ced0d6" stroke-width="2.4" stroke-linejoin="round"/><circle cx="388" cy="920.2" r="3.1" fill="none" stroke="#ced0d6" stroke-width="2"/>
</svg>
</div>
<div class="hline" style="top:850px"></div>
<div class="t b" style="left:24.6px;top:851.6px;height:80px;line-height:80px;font-size:26px;letter-spacing:0;font-weight:700">结构</div>
<div class="hline" style="top:932px"></div>
<div class="a" style="left:0;top:934px;width:756px;height:770px;overflow:hidden">
<div id="k_st_0" class="t" style="left:174.80px;top:-35.8px;letter-spacing:0.12px;">toString(): String</div>
<div id="k_st_0b" class="t" style="left:389.00px;top:-35.8px;letter-spacing:0.12px;color:#868a91;">↑Object</div>
<div id="k_st_1" class="t" style="left:173.80px;top:12.2px;letter-spacing:0.235px;">readObject(ObjectInputStream): void</div>
<div id="k_st_2" class="t" style="left:175.80px;top:60.2px;letter-spacing:0.057px;">writeReplace(): Object</div>
<div id="k_st_3" class="t" style="left:175.80px;top:108.2px;letter-spacing:-0.167px;">javaxInjectProviderClass: Class&lt;?&gt;</div>
<div id="k_st_4" class="t" style="left:174.80px;top:156.2px;letter-spacing:-0.156px;">serializableFactories: Map&lt;String, Reference&lt;DefaultListableBeanFactory&gt;&gt;</div>
<div id="k_st_5" class="t" style="left:174.80px;top:204.2px;letter-spacing:0.15px;">serializationId: String</div>
<div id="k_st_6" class="t" style="left:174.80px;top:252.2px;letter-spacing:0.109px;">allowBeanDefinitionOverriding: boolean = true</div>
<div id="k_st_7" class="t" style="left:174.80px;top:300.2px;letter-spacing:-0.049px;">allowEagerClassLoading: boolean = true</div>
<div id="k_st_8" class="t" style="left:174.80px;top:348.2px;letter-spacing:0.172px;">dependencyComparator: Comparator&lt;Object&gt;</div>
<div id="k_st_9" class="t" style="left:174.80px;top:396.2px;letter-spacing:0.016px;">autowireCandidateResolver: AutowireCandidateResolver</div>
<div id="k_st_10" class="t" style="left:173.80px;top:444.2px;letter-spacing:-0.074px;">resolvableDependencies: Map&lt;Class&lt;?&gt;, Object&gt;</div>
<div id="k_st_11" class="t" style="left:173.80px;top:492.2px;letter-spacing:0.111px;">beanDefinitionMap: Map&lt;String, BeanDefinition&gt;</div>
<div id="k_st_12" class="t" style="left:173.80px;top:540.2px;letter-spacing:-0.077px;">mergedBeanDefinitionHolders: Map&lt;String, BeanDefinitionHolder&gt;</div>
<div id="k_st_13" class="t" style="left:174.80px;top:588.2px;letter-spacing:-0.248px;">allBeanNamesByType: Map&lt;Class&lt;?&gt;, String[]&gt; = new ConcurrentHashMap</div>
<div id="k_st_14" class="t" style="left:174.80px;top:636.2px;letter-spacing:-0.344px;">singletonBeanNamesByType: Map&lt;Class&lt;?&gt;, String[]&gt;</div>
<div id="k_st_15" class="t" style="left:173.80px;top:684.2px;letter-spacing:0.13px;">beanDefinitionNames: List&lt;String&gt; = new ArrayList&lt;&gt;</div>
<div id="k_st_16" class="t" style="left:173.80px;top:732.2px;letter-spacing:-0.077px;">manualSingletonNames: Set&lt;String&gt; = new LinkedHashSet&lt;&gt;</div>
<svg class="a" style="left:0;top:0" width="756" height="770" viewBox="82 1016 756 770">
<circle cx="202" cy="1004" r="12.9" fill="#3a1d1f" stroke="#e24c53" stroke-width="2.1"/><text x="202" y="1009.6" font-family="Liberation Sans, sans-serif" font-size="22" fill="#e24c53" text-anchor="middle" letter-spacing="0">m</text>
<circle cx="202" cy="1052" r="12.9" fill="#3a1d1f" stroke="#e24c53" stroke-width="2.1"/><text x="202" y="1057.6" font-family="Liberation Sans, sans-serif" font-size="22" fill="#e24c53" text-anchor="middle" letter-spacing="0">m</text>
<path d="M230.3,1050.4 V1048.8 a3.7,3.7 0 0 1 7.4,0 V1050.4" fill="none" stroke="#e24c53" stroke-width="2.1"/><rect x="228.9" y="1051.6" width="10.2" height="7.6" rx="1.2" fill="#3a1d1f" stroke="#e24c53" stroke-width="2.1"/>
<circle cx="202" cy="1100" r="12.9" fill="#3a1d1f" stroke="#e24c53" stroke-width="2.1"/><text x="202" y="1105.6" font-family="Liberation Sans, sans-serif" font-size="22" fill="#e24c53" text-anchor="middle" letter-spacing="0">m</text>
<circle cx="230.9" cy="1099" r="3.8" fill="none" stroke="#f2c037" stroke-width="2.2"/><path d="M234.8,1098.8 H242.2 M239.2,1098.8 V1104" fill="none" stroke="#f2c037" stroke-width="2.2"/>
<circle cx="202" cy="1148" r="12.9" fill="#3a2520" stroke="#c77d55" stroke-width="2.1"/><text x="202" y="1155" font-family="Liberation Sans, sans-serif" font-size="21" fill="#c77d55" text-anchor="middle" letter-spacing="0">f</text>
<path d="M194,1145.8000000000002 L204.2,1156 L194,1166.1999999999998 L183.8,1156 Z" fill="#202124"/><path d="M194,1149.4 L200.6,1156 L194,1162.6 L187.4,1156 Z" fill="#3a3b40" stroke="#ced0d6" stroke-width="2" stroke-linejoin="round"/>
<path d="M230.3,1146.4 V1144.8 a3.7,3.7 0 0 1 7.4,0 V1146.4" fill="none" stroke="#e24c53" stroke-width="2.1"/><rect x="228.9" y="1147.6" width="10.2" height="7.6" rx="1.2" fill="#3a1d1f" stroke="#e24c53" stroke-width="2.1"/>
<circle cx="202" cy="1196" r="12.9" fill="#3a2520" stroke="#c77d55" stroke-width="2.1"/><text x="202" y="1203" font-family="Liberation Sans, sans-serif" font-size="21" fill="#c77d55" text-anchor="middle" letter-spacing="0">f</text>
<g transform="translate(192,1185.8) rotate(-40)"><ellipse cx="0" cy="0" rx="8.6" ry="5.8" fill="#202124"/><ellipse cx="0" cy="0" rx="6.4" ry="3.6" fill="#3a3b40" stroke="#ced0d6" stroke-width="2"/></g><path d="M195.2,1190.2 L199.6,1193.0 L197.6,1188.0 Z" fill="#ced0d6"/>
<path d="M194,1193.8000000000002 L204.2,1204 L194,1214.1999999999998 L183.8,1204 Z" fill="#202124"/><path d="M194,1197.4 L200.6,1204 L194,1210.6 L187.4,1204 Z" fill="#3a3b40" stroke="#ced0d6" stroke-width="2" stroke-linejoin="round"/>
<path d="M230.3,1194.4 V1192.8 a3.7,3.7 0 0 1 7.4,0 V1194.4" fill="none" stroke="#e24c53" stroke-width="2.1"/><rect x="228.9" y="1195.6" width="10.2" height="7.6" rx="1.2" fill="#3a1d1f" stroke="#e24c53" stroke-width="2.1"/>
<circle cx="202" cy="1244" r="12.9" fill="#3a2520" stroke="#c77d55" stroke-width="2.1"/><text x="202" y="1251" font-family="Liberation Sans, sans-serif" font-size="21" fill="#c77d55" text-anchor="middle" letter-spacing="0">f</text>
<path d="M230.3,1242.4 V1240.8 a3.7,3.7 0 0 1 7.4,0 V1242.4" fill="none" stroke="#e24c53" stroke-width="2.1"/><rect x="228.9" y="1243.6" width="10.2" height="7.6" rx="1.2" fill="#3a1d1f" stroke="#e24c53" stroke-width="2.1"/>
<circle cx="202" cy="1292" r="12.9" fill="#3a2520" stroke="#c77d55" stroke-width="2.1"/><text x="202" y="1299" font-family="Liberation Sans, sans-serif" font-size="21" fill="#c77d55" text-anchor="middle" letter-spacing="0">f</text>
<path d="M230.3,1290.4 V1288.8 a3.7,3.7 0 0 1 7.4,0 V1290.4" fill="none" stroke="#e24c53" stroke-width="2.1"/><rect x="228.9" y="1291.6" width="10.2" height="7.6" rx="1.2" fill="#3a1d1f" stroke="#e24c53" stroke-width="2.1"/>
<circle cx="202" cy="1340" r="12.9" fill="#3a2520" stroke="#c77d55" stroke-width="2.1"/><text x="202" y="1347" font-family="Liberation Sans, sans-serif" font-size="21" fill="#c77d55" text-anchor="middle" letter-spacing="0">f</text>
<path d="M230.3,1338.4 V1336.8 a3.7,3.7 0 0 1 7.4,0 V1338.4" fill="none" stroke="#e24c53" stroke-width="2.1"/><rect x="228.9" y="1339.6" width="10.2" height="7.6" rx="1.2" fill="#3a1d1f" stroke="#e24c53" stroke-width="2.1"/>
<circle cx="202" cy="1388" r="12.9" fill="#3a2520" stroke="#c77d55" stroke-width="2.1"/><text x="202" y="1395" font-family="Liberation Sans, sans-serif" font-size="21" fill="#c77d55" text-anchor="middle" letter-spacing="0">f</text>
<path d="M230.3,1386.4 V1384.8 a3.7,3.7 0 0 1 7.4,0 V1386.4" fill="none" stroke="#e24c53" stroke-width="2.1"/><rect x="228.9" y="1387.6" width="10.2" height="7.6" rx="1.2" fill="#3a1d1f" stroke="#e24c53" stroke-width="2.1"/>
<circle cx="202" cy="1436" r="12.9" fill="#3a2520" stroke="#c77d55" stroke-width="2.1"/><text x="202" y="1443" font-family="Liberation Sans, sans-serif" font-size="21" fill="#c77d55" text-anchor="middle" letter-spacing="0">f</text>
<path d="M230.3,1434.4 V1432.8 a3.7,3.7 0 0 1 7.4,0 V1434.4" fill="none" stroke="#e24c53" stroke-width="2.1"/><rect x="228.9" y="1435.6" width="10.2" height="7.6" rx="1.2" fill="#3a1d1f" stroke="#e24c53" stroke-width="2.1"/>
<circle cx="202" cy="1484" r="12.9" fill="#3a2520" stroke="#c77d55" stroke-width="2.1"/><text x="202" y="1491" font-family="Liberation Sans, sans-serif" font-size="21" fill="#c77d55" text-anchor="middle" letter-spacing="0">f</text>
<g transform="translate(192,1473.8) rotate(-40)"><ellipse cx="0" cy="0" rx="8.6" ry="5.8" fill="#202124"/><ellipse cx="0" cy="0" rx="6.4" ry="3.6" fill="#3a3b40" stroke="#ced0d6" stroke-width="2"/></g><path d="M195.2,1478.2 L199.6,1481.0 L197.6,1476.0 Z" fill="#ced0d6"/>
<path d="M230.3,1482.4 V1480.8 a3.7,3.7 0 0 1 7.4,0 V1482.4" fill="none" stroke="#e24c53" stroke-width="2.1"/><rect x="228.9" y="1483.6" width="10.2" height="7.6" rx="1.2" fill="#3a1d1f" stroke="#e24c53" stroke-width="2.1"/>
<circle cx="202" cy="1532" r="12.9" fill="#3a2520" stroke="#c77d55" stroke-width="2.1"/><text x="202" y="1539" font-family="Liberation Sans, sans-serif" font-size="21" fill="#c77d55" text-anchor="middle" letter-spacing="0">f</text>
<g transform="translate(192,1521.8) rotate(-40)"><ellipse cx="0" cy="0" rx="8.6" ry="5.8" fill="#202124"/><ellipse cx="0" cy="0" rx="6.4" ry="3.6" fill="#3a3b40" stroke="#ced0d6" stroke-width="2"/></g><path d="M195.2,1526.2 L199.6,1529.0 L197.6,1524.0 Z" fill="#ced0d6"/>
<path d="M230.3,1530.4 V1528.8 a3.7,3.7 0 0 1 7.4,0 V1530.4" fill="none" stroke="#e24c53" stroke-width="2.1"/><rect x="228.9" y="1531.6" width="10.2" height="7.6" rx="1.2" fill="#3a1d1f" stroke="#e24c53" stroke-width="2.1"/>
<circle cx="202" cy="1580" r="12.9" fill="#3a2520" stroke="#c77d55" stroke-width="2.1"/><text x="202" y="1587" font-family="Liberation Sans, sans-serif" font-size="21" fill="#c77d55" text-anchor="middle" letter-spacing="0">f</text>
<g transform="translate(192,1569.8) rotate(-40)"><ellipse cx="0" cy="0" rx="8.6" ry="5.8" fill="#202124"/><ellipse cx="0" cy="0" rx="6.4" ry="3.6" fill="#3a3b40" stroke="#ced0d6" stroke-width="2"/></g><path d="M195.2,1574.2 L199.6,1577.0 L197.6,1572.0 Z" fill="#ced0d6"/>
<path d="M230.3,1578.4 V1576.8 a3.7,3.7 0 0 1 7.4,0 V1578.4" fill="none" stroke="#e24c53" stroke-width="2.1"/><rect x="228.9" y="1579.6" width="10.2" height="7.6" rx="1.2" fill="#3a1d1f" stroke="#e24c53" stroke-width="2.1"/>
<circle cx="202" cy="1628" r="12.9" fill="#3a2520" stroke="#c77d55" stroke-width="2.1"/><text x="202" y="1635" font-family="Liberation Sans, sans-serif" font-size="21" fill="#c77d55" text-anchor="middle" letter-spacing="0">f</text>
<g transform="translate(192,1617.8) rotate(-40)"><ellipse cx="0" cy="0" rx="8.6" ry="5.8" fill="#202124"/><ellipse cx="0" cy="0" rx="6.4" ry="3.6" fill="#3a3b40" stroke="#ced0d6" stroke-width="2"/></g><path d="M195.2,1622.2 L199.6,1625.0 L197.6,1620.0 Z" fill="#ced0d6"/>
<path d="M230.3,1626.4 V1624.8 a3.7,3.7 0 0 1 7.4,0 V1626.4" fill="none" stroke="#e24c53" stroke-width="2.1"/><rect x="228.9" y="1627.6" width="10.2" height="7.6" rx="1.2" fill="#3a1d1f" stroke="#e24c53" stroke-width="2.1"/>
<circle cx="202" cy="1676" r="12.9" fill="#3a2520" stroke="#c77d55" stroke-width="2.1"/><text x="202" y="1683" font-family="Liberation Sans, sans-serif" font-size="21" fill="#c77d55" text-anchor="middle" letter-spacing="0">f</text>
<g transform="translate(192,1665.8) rotate(-40)"><ellipse cx="0" cy="0" rx="8.6" ry="5.8" fill="#202124"/><ellipse cx="0" cy="0" rx="6.4" ry="3.6" fill="#3a3b40" stroke="#ced0d6" stroke-width="2"/></g><path d="M195.2,1670.2 L199.6,1673.0 L197.6,1668.0 Z" fill="#ced0d6"/>
<path d="M230.3,1674.4 V1672.8 a3.7,3.7 0 0 1 7.4,0 V1674.4" fill="none" stroke="#e24c53" stroke-width="2.1"/><rect x="228.9" y="1675.6" width="10.2" height="7.6" rx="1.2" fill="#3a1d1f" stroke="#e24c53" stroke-width="2.1"/>
<circle cx="202" cy="1724" r="12.9" fill="#3a2520" stroke="#c77d55" stroke-width="2.1"/><text x="202" y="1731" font-family="Liberation Sans, sans-serif" font-size="21" fill="#c77d55" text-anchor="middle" letter-spacing="0">f</text>
<path d="M230.3,1722.4 V1720.8 a3.7,3.7 0 0 1 7.4,0 V1722.4" fill="none" stroke="#e24c53" stroke-width="2.1"/><rect x="228.9" y="1723.6" width="10.2" height="7.6" rx="1.2" fill="#3a1d1f" stroke="#e24c53" stroke-width="2.1"/>
<circle cx="202" cy="1772" r="12.9" fill="#3a2520" stroke="#c77d55" stroke-width="2.1"/><text x="202" y="1779" font-family="Liberation Sans, sans-serif" font-size="21" fill="#c77d55" text-anchor="middle" letter-spacing="0">f</text>
<path d="M230.3,1770.4 V1768.8 a3.7,3.7 0 0 1 7.4,0 V1770.4" fill="none" stroke="#e24c53" stroke-width="2.1"/><rect x="228.9" y="1771.6" width="10.2" height="7.6" rx="1.2" fill="#3a1d1f" stroke="#e24c53" stroke-width="2.1"/>
</svg>
</div>
</div>
<svg class="a" style="left:0;top:0;pointer-events:none" width="300" height="200" viewBox="0 0 300 200"><path d="M172.8,120.60000000000001 L180,127.8 L187.2,120.60000000000001" fill="none" stroke="#a4a7b0" stroke-width="2.0" stroke-linecap="round" stroke-linejoin="round"/></svg>
<div class="a" id="editor">
<div class="a" style="left:2px;top:0;width:438px;height:80px;background:#211d19"></div>
<div class="a" style="left:440px;top:0;width:516px;height:80px;background:#2e261c"></div>
<div class="a" style="left:0;top:80px;width:1854px;height:2px;background:#2b2d30"></div>
<div class="a" style="left:440px;top:73.8px;width:516px;height:8px;background:#2f60ec;border-radius:4px"></div>
<div id="k_tab1" class="t" style="left:9.40px;top:17.0px;letter-spacing:-0.032px;color:#b9bbc1;">ApplicationContextRunner.java</div>
<div class="t" style="left:-9px;width:16px;text-align:right;top:17px;color:#b9bbc1;-webkit-mask-image:linear-gradient(90deg,transparent 8px,rgba(0,0,0,.22) 16px);mask-image:linear-gradient(90deg,transparent 8px,rgba(0,0,0,.22) 16px)">t</div>
<div id="k_tab2" class="t" style="left:506.70px;top:17.0px;letter-spacing:-0.09px;">DefaultListableBeanFactory.java</div>
<div id="k_tab3" class="t" style="left:1020.60px;top:17.0px;letter-spacing:0.429px;color:#b9bbc1;">application-config.yml</div>
<div id="k_tab4" class="t" style="left:1416.80px;top:17.0px;letter-spacing:0.17px;color:#b9bbc1;width:306px;overflow:hidden;-webkit-mask-image:linear-gradient(90deg,#000 272px,transparent 306px);mask-image:linear-gradient(90deg,#000 272px,transparent 306px)">QuickForumApplication.java</div>
<div class="a" style="left:0;top:261px;width:1854px;height:1443px;overflow:hidden">
<div class="a" style="left:0;top:475px;width:1854px;height:44px;background:#1f2024"></div>
<div class="g" style="left:196px;top:0;height:1443px;background:#27282c"></div>
<div class="g" style="left:260.0px;top:-35px;height:352px"></div>
<div class="g" style="left:322.4px;top:-35px;height:308px"></div>
<div class="g" style="left:384.8px;top:-35px;height:264px"></div>
<div class="g" style="left:447.2px;top:-35px;height:132px"></div>
<div class="g" style="left:509.6px;top:-35px;height:88px"></div>
<div class="g" style="left:260.0px;top:519px;height:792px"></div>
<div class="g" style="left:322.4px;top:607px;height:44px"></div>
<div class="g" style="left:322.4px;top:783px;height:44px"></div>
<div class="g" style="left:322.4px;top:915px;height:308px"></div>
<div class="g" style="left:384.8px;top:1003px;height:44px"></div>
<div class="g" style="left:384.8px;top:1135px;height:44px"></div>
<div class="a" style="left:482.8px;top:475px;width:171.6px;height:44px;background:#2a2f2e"></div>
<div class="a" style="left:482.2px;top:479px;width:4px;height:36.6px;background:#ced0d6"></div>
<div class="a" style="left:1091.2px;top:783px;width:171.6px;height:44px;background:#35383b"></div>
<div class="ln" style="top:-33.8px">482</div>
<div class="cl code" style="top:-33.8px">                    <span class="k">if</span> (!(beanInstance <span class="k">instanceof</span> NullBean)) {</div>
<div class="ln" style="top:10.2px">483</div>
<div class="cl code" style="top:10.2px">                        matchingBeans.put(beanName, (<span class="tp">T</span>) beanInstance);</div>
<div class="ln" style="top:54.2px">484</div>
<div class="cl code" style="top:54.2px">                    }</div>
<div class="ln" style="top:98.2px">485</div>
<div class="cl code" style="top:98.2px">                }</div>
<div class="ln" style="top:142.2px">486</div>
<div class="cl code" style="top:142.2px">                Stream&lt;<span class="tp">T</span>&gt; stream = matchingBeans.values().stream();</div>
<div class="ln" style="top:186.2px">487</div>
<div class="cl code" style="top:186.2px">                <span class="k">return</span> stream.sorted(adaptOrderComparator(matchingBeans));</div>
<div class="ln" style="top:230.2px">488</div>
<div class="cl code" style="top:230.2px">            }</div>
<div class="ln" style="top:274.2px">489</div>
<div class="cl code" style="top:274.2px">        };</div>
<div class="ln" style="top:318.2px">490</div>
<div class="cl code" style="top:318.2px">    }</div>
<div class="ln" style="top:362.2px">491</div>
<div class="ln" style="top:432.2px">492</div>
<div class="cl code" style="top:432.2px">    <span class="an">@Nullable</span></div>
<div class="ln" style="top:476.2px;color:#a1a3ab">493</div>
<div class="cl code" style="top:476.2px">    <span class="k">private</span> &lt;<span class="tp">T</span>&gt; <span class="tp">T</span> <span class="f">resolveBean</span>(ResolvableType requiredType, <span class="an">@Nullable</span> Object[] args, <span class="k">boolean</span> nonUniqueAsNull) {</div>
<div class="ln" style="top:520.2px">494</div>
<div class="cl code" style="top:520.2px">        NamedBeanHolder&lt;<span class="tp">T</span>&gt; namedBean = resolveNamedBean(requiredType, args, nonUniqueAsNull);</div>
<div class="ln" style="top:564.2px">495</div>
<div class="cl code" style="top:564.2px">        <span class="k">if</span> (namedBean != <span class="k">null</span>) {</div>
<div class="ln" style="top:608.2px">496</div>
<div class="cl code" style="top:608.2px">            <span class="k">return</span> namedBean.getBeanInstance();</div>
<div class="ln" style="top:652.2px">497</div>
<div class="cl code" style="top:652.2px">        }</div>
<div class="ln" style="top:696.2px">498</div>
<div class="cl code" style="top:696.2px">        BeanFactory parent = getParentBeanFactory();</div>
<div class="ln" style="top:740.2px">499</div>
<div class="cl code" style="top:740.2px">        <span class="k">if</span> (parent <span class="k">instanceof</span> DefaultListableBeanFactory) {</div>
<div class="ln" style="top:784.2px">500</div>
<div class="cl code" style="top:784.2px">            <span class="k">return</span> ((DefaultListableBeanFactory) parent).resolveBean(requiredType, args, nonUniqueAsNull);</div>
<div class="ln" style="top:828.2px">501</div>
<div class="cl code" style="top:828.2px">        }</div>
<div class="ln" style="top:872.2px">502</div>
<div class="cl code" style="top:872.2px">        <span class="k">else</span> <span class="k">if</span> (parent != <span class="k">null</span>) {</div>
<div class="ln" style="top:916.2px">503</div>
<div class="cl code" style="top:916.2px">            ObjectProvider&lt;<span class="tp">T</span>&gt; parentProvider = parent.getBeanProvider(requiredType);</div>
<div class="ln" style="top:960.2px">504</div>
<div class="cl code" style="top:960.2px">            <span class="k">if</span> (args != <span class="k">null</span>) {</div>
<div class="ln" style="top:1004.2px">505</div>
<div class="cl code" style="top:1004.2px">                <span class="k">return</span> parentProvider.getObject(args);</div>
<div class="ln" style="top:1048.2px">506</div>
<div class="cl code" style="top:1048.2px">            }</div>
<div class="ln" style="top:1092.2px">507</div>
<div class="cl code" style="top:1092.2px">            <span class="k">else</span> {</div>
<div class="ln" style="top:1136.2px">508</div>
<div class="cl code" style="top:1136.2px">                <span class="k">return</span> (nonUniqueAsNull ? parentProvider.getIfUnique() : parentProvider.getIfAvailable());</div>
<div class="ln" style="top:1180.2px">509</div>
<div class="cl code" style="top:1180.2px">            }</div>
<div class="ln" style="top:1224.2px">510</div>
<div class="cl code" style="top:1224.2px">        }</div>
<div class="ln" style="top:1268.2px">511</div>
<div class="cl code" style="top:1268.2px">        <span class="k">return</span> <span class="k">null</span>;</div>
<div class="ln" style="top:1312.2px">512</div>
<div class="cl code" style="top:1312.2px">    }</div>
<div class="ln" style="top:1356.2px">513</div>
<div class="ln" style="top:1426.2px">514</div>
<div class="cl code" style="top:1426.2px">    <span class="k">private</span> String[] <span class="f">getBeanNamesForTypedStream</span>(ResolvableType requiredType, <span class="k">boolean</span> allowEagerInit) {</div>
<svg class="a" style="left:0;top:0" width="1854" height="1443" viewBox="838 343 1854 1443">
<g fill="none" stroke="#ced0d6" stroke-width="2.2" stroke-linecap="round"><circle cx="956" cy="840" r="5.2"/><path d="M961.2,834.6 V842.6 a3.6,3.6 0 0 0 7.2,0 V840 A12.6,12.6 0 1 0 963.4,850.4"/></g>
<circle cx="990" cy="840" r="12" fill="#b0b6c6"/><rect x="983.6" y="833.8" width="13" height="12.6" fill="#0f1012"/><rect x="990.2" y="843" width="4" height="1.8" fill="#fff"/>
<circle cx="990" cy="1790" r="12" fill="#b0b6c6"/><rect x="983.6" y="1783.8" width="13" height="12.6" fill="#0f1012"/><rect x="990.2" y="1793" width="4" height="1.8" fill="#fff"/>
<path d="M1068,825 a9.7,9.7 0 0 1 9.7,9.7 c0,4.4 -3.4,6.4 -4.6,11 h-10.2 c-1.2,-4.6 -4.6,-6.6 -4.6,-11 a9.7,9.7 0 0 1 9.7,-9.7 z" fill="#f2bd4b"/><path d="M1063,848.2 h10 M1063,851.2 h10 M1064.6,854 h6.8" stroke="#dfe1e5" stroke-width="1.8"/>
<g transform="translate(1130.5,761) scale(0.56)"><polygon points="-5.90,-20.20 0.60,-20.20 3.30,-15.50 14.10,-15.50 17.10,-9.80 14.50,-4.70 20.44,4.99 17.19,10.62 11.77,10.61 6.37,19.96 -0.06,19.71 -3.18,14.91 -14.54,15.21 -17.79,9.58 -15.07,4.89 -20.47,-4.46 -17.04,-9.91 -11.32,-10.21" fill="#606266"/><polygon points="-5.90,-19.60 -2.70,-14.30 -5.30,-9.30 15.90,-9.30 13.60,-5.00 -7.70,-5.00 -10.90,-10.40" fill="#1b1c1f" transform="rotate(0)"/><polygon points="-5.90,-19.60 -2.70,-14.30 -5.30,-9.30 15.90,-9.30 13.60,-5.00 -7.70,-5.00 -10.90,-10.40" fill="#1b1c1f" transform="rotate(120)"/><polygon points="-5.90,-19.60 -2.70,-14.30 -5.30,-9.30 15.90,-9.30 13.60,-5.00 -7.70,-5.00 -10.90,-10.40" fill="#1b1c1f" transform="rotate(240)"/></g>
<path d="M1148.0,759.5 L1153,764.5 L1158.0,759.5" fill="none" stroke="#9da0a8" stroke-width="1.6" stroke-linecap="round" stroke-linejoin="round"/>
<g transform="translate(1130.5,1755) scale(0.56)"><polygon points="-5.90,-20.20 0.60,-20.20 3.30,-15.50 14.10,-15.50 17.10,-9.80 14.50,-4.70 20.44,4.99 17.19,10.62 11.77,10.61 6.37,19.96 -0.06,19.71 -3.18,14.91 -14.54,15.21 -17.79,9.58 -15.07,4.89 -20.47,-4.46 -17.04,-9.91 -11.32,-10.21" fill="#606266"/><polygon points="-5.90,-19.60 -2.70,-14.30 -5.30,-9.30 15.90,-9.30 13.60,-5.00 -7.70,-5.00 -10.90,-10.40" fill="#1b1c1f" transform="rotate(0)"/><polygon points="-5.90,-19.60 -2.70,-14.30 -5.30,-9.30 15.90,-9.30 13.60,-5.00 -7.70,-5.00 -10.90,-10.40" fill="#1b1c1f" transform="rotate(120)"/><polygon points="-5.90,-19.60 -2.70,-14.30 -5.30,-9.30 15.90,-9.30 13.60,-5.00 -7.70,-5.00 -10.90,-10.40" fill="#1b1c1f" transform="rotate(240)"/></g>
<path d="M1148.0,1753.5 L1153,1758.5 L1158.0,1753.5" fill="none" stroke="#9da0a8" stroke-width="1.6" stroke-linecap="round" stroke-linejoin="round"/>
</svg>
</div>
<div class="a" style="left:0;top:82px;width:1854px;height:177px;background:#17181a;overflow:hidden">
<div class="ln" style="top:1px">121</div>
<div class="cl code" style="top:1px"><span class="k">public</span> <span class="k">class</span> DefaultListableBeanFactory <span class="k">extends</span> AbstractAutowireCapableBeanFactory</div>
<div class="ln" style="top:45px">401</div>
<div class="cl code" style="top:45px">    <span class="k">public</span> &lt;<span class="tp">T</span>&gt; ObjectProvider&lt;<span class="tp">T</span>&gt; <span class="f">getBeanProvider</span>(ResolvableType requiredType, <span class="k">boolean</span> allowEagerInit) {</div>
<div class="ln" style="top:89px">402</div>
<div class="cl code" style="top:89px">        <span class="k">return</span> <span class="k">new</span> BeanObjectProvider&lt;<span class="tp">T</span>&gt;() {</div>
<div class="ln" style="top:133px">474</div>
<div class="cl code" style="top:133px">            <span class="k">public</span> Stream&lt;<span class="tp">T</span>&gt; <span class="f">orderedStream</span>() {</div>
</div>
<div class="a" style="left:0;top:259px;width:1854px;height:2px;background:#2b2d30"></div>
<div class="a" style="left:1532px;top:84px;width:322px;height:44px;background:#17181a"></div>
<div class="t" style="left:1549px;top:85px;font-size:21.6px;letter-spacing:0;color:#b4b8bf;-webkit-text-stroke:0">阅读器模式</div>
<div class="a" style="left:1686px;top:90px;width:2px;height:36px;background:#393b40"></div>
<div class="t" style="left:1743px;top:85px;font-size:22px;letter-spacing:0;color:#c9cbd0">2</div>
<div class="a" style="left:1824px;top:135.6px;width:28px;height:4.4px;background:#d4384e"></div>
<div class="a" style="left:1824px;top:316.6px;width:28px;height:3.6px;background:#4b6a58"></div>
<div class="a" style="left:1824px;top:359.8px;width:28px;height:3.6px;background:#4b6a58"></div>
<div class="a" style="left:1824px;top:368.2px;width:28px;height:3.6px;background:#4b6a58"></div>
<div class="a" style="left:1824px;top:377.2px;width:28px;height:3.6px;background:#4b6a58"></div>
<div class="a" style="left:1824px;top:394px;width:28px;height:3.6px;background:#4b6a58"></div>
<div class="a" style="left:1824px;top:433.4px;width:28px;height:9.6px;background:#4b6a58"></div>
<div class="a" style="left:1824px;top:1659.4px;width:28px;height:4.6px;background:#d4384e"></div>
<div class="a" style="left:1832px;top:420px;width:14.6px;height:63.6px;border-radius:7px;background:rgba(120,124,132,.28)"></div>
<svg class="a" style="left:0;top:0;pointer-events:none" width="1854" height="300" viewBox="838 82 1854 300">
<circle cx="1318" cy="122" r="12.8" fill="#1d2440" stroke="#4b7ef5" stroke-width="2.4"/><path d="M1322.38,118.05 A5.9,5.9 0 1 0 1322.38,125.95" fill="none" stroke="#4b7ef5" stroke-width="2.1"/>
<circle cx="2228" cy="122" r="12.8" fill="#1d2440" stroke="#4b7ef5" stroke-width="2.4"/><path d="M2232.38,118.05 A5.9,5.9 0 1 0 2232.38,125.95" fill="none" stroke="#4b7ef5" stroke-width="2.1"/>
<rect x="1821.3" y="111.3" width="21.6" height="21.6" rx="3.6" fill="#2b1a1b" stroke="#b5474a" stroke-width="2.4"/><text x="1832.1" y="129" font-family="Liberation Sans, sans-serif" font-size="18.5" fill="#c75450" text-anchor="middle">Y</text>
<path d="M1755.6,116 L1767.2,127.6 M1767.2,116 L1755.6,127.6" stroke="#6c707a" stroke-width="2" stroke-linecap="round"/>
<path d="M2591.0,117.5 L2600,126.5 L2609.0,117.5" fill="none" stroke="#ced0d6" stroke-width="2.2" stroke-linecap="round" stroke-linejoin="round"/>
<circle cx="2652" cy="111.4" r="2.4" fill="#ced0d6"/>
<circle cx="2652" cy="122" r="2.4" fill="#ced0d6"/>
<circle cx="2652" cy="132.6" r="2.4" fill="#ced0d6"/>
<circle cx="2562" cy="190" r="11" fill="none" stroke="#db3b4b" stroke-width="2.4"/><path d="M2562,183.6 V189.6" stroke="#db3b4b" stroke-width="2.8" stroke-linecap="round"/><circle cx="2562" cy="194.6" r="1.7" fill="#db3b4b"/>
<path d="M2616.8,193.79999999999998 L2624,186.6 L2631.2,193.79999999999998" fill="none" stroke="#a4a7b0" stroke-width="2.0" stroke-linecap="round" stroke-linejoin="round"/>
<path d="M2658.6000000000004,186.8 L2665.8,194.0 L2673.0,186.8" fill="none" stroke="#a4a7b0" stroke-width="2.0" stroke-linecap="round" stroke-linejoin="round"/>
</svg>
</div>
</div>
</body></html>
